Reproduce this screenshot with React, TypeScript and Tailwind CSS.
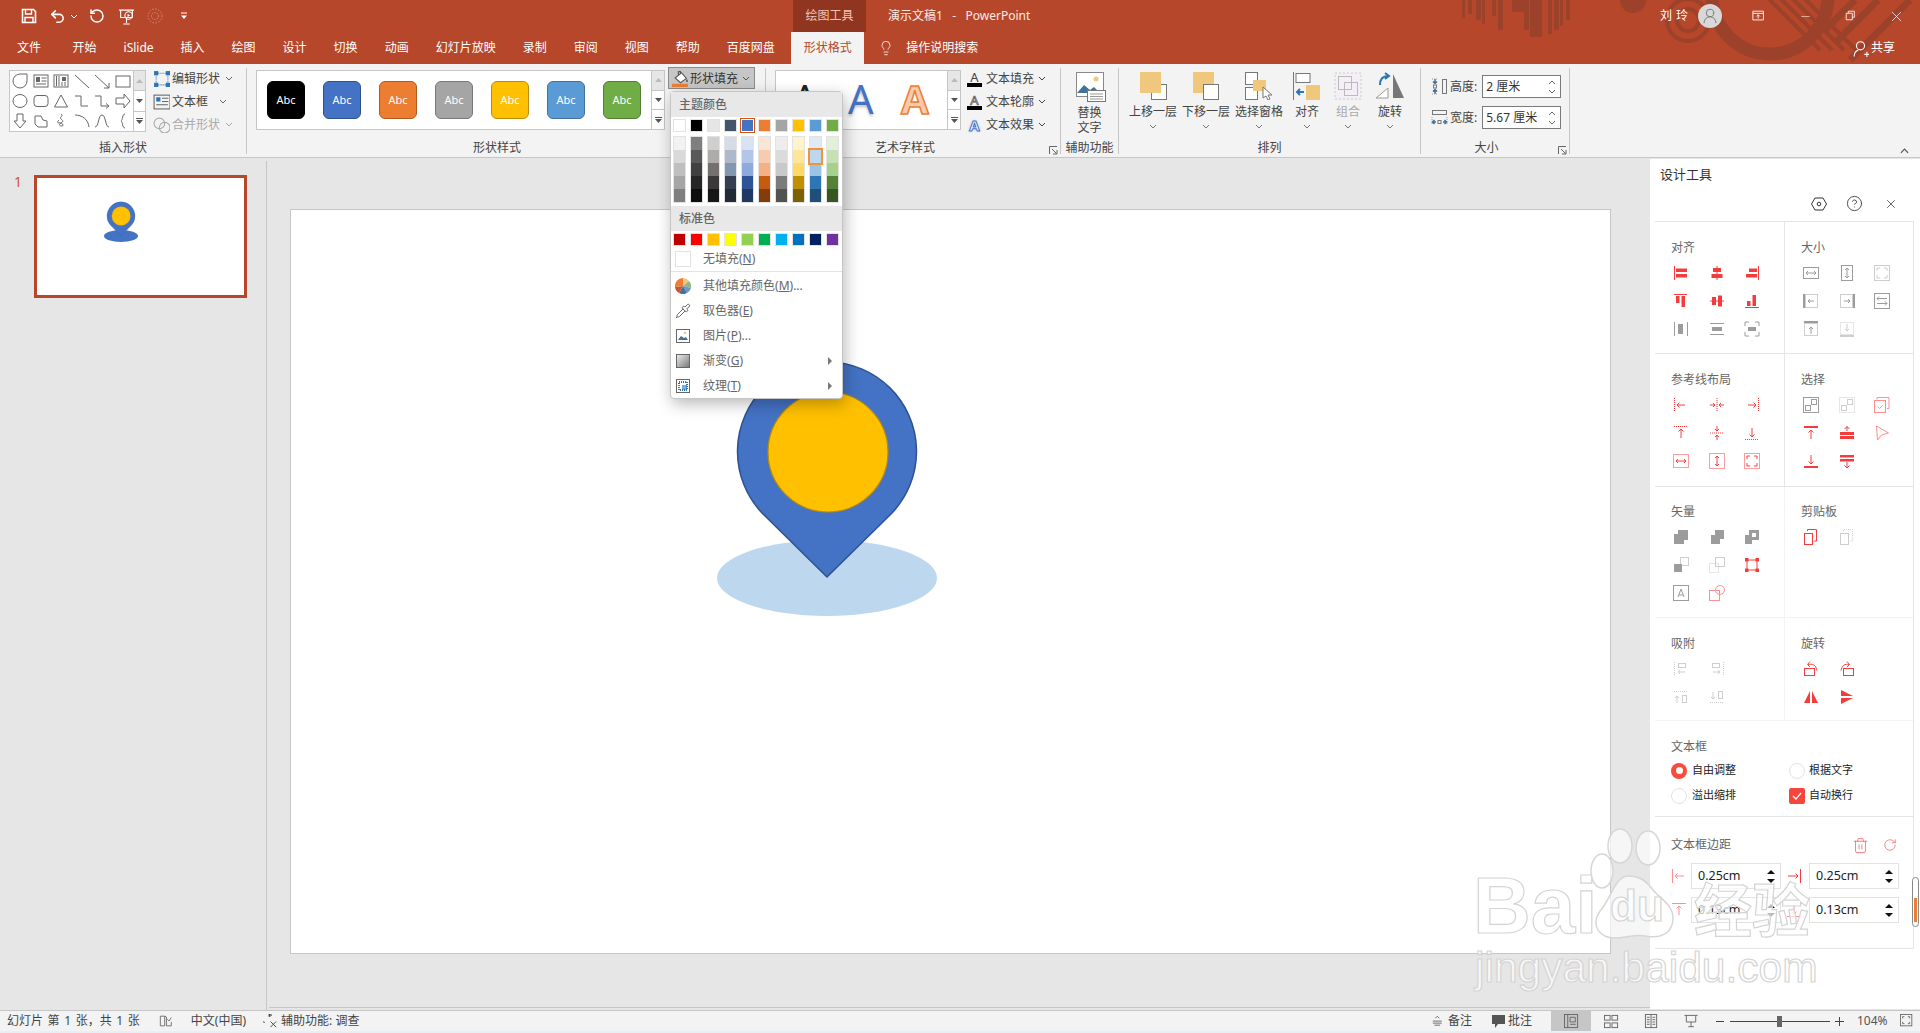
import { ReactNode } from "react";
import { Undo2, RotateCcw, Lightbulb, X, Minus, Trash2, RotateCw, CircleHelp, Pipette, UserRound } from "lucide-react";

const red = "text-[#f53c3c]";
const pink = "text-[#ff8f8f]";
const gray = "text-[#9c9c9c]";
const pale = "text-[#cdcdcd]";

function Ic({ c, children, s = 16, v = "0 0 16 16" }: { c?: string; children: ReactNode; s?: number; v?: string }) {
  return (
    <svg width={s} height={s} viewBox={v} fill="none" stroke="currentColor" strokeWidth={1} className={`shrink-0 ${c ?? ""}`}>
      {children}
    </svg>
  );
}

const b = (x: number, y: number, w: number, h: number) => <rect x={x} y={y} width={w} height={h} fill="currentColor" stroke="none" />;
const o = (x: number, y: number, w: number, h: number, dash?: boolean) => (
  <rect x={x} y={y} width={w} height={h} strokeDasharray={dash ? "1 1" : undefined} />
);
const l = (d: string, dash?: boolean) => <path d={d} strokeDasharray={dash ? "1 1" : undefined} />;

function Chev({ c = "text-[#666]" }: { c?: string }) {
  return (
    <svg width="8" height="5" viewBox="0 0 8 5" fill="none" stroke="currentColor" className={`shrink-0 ${c}`}>
      <path d="M1 1l3 3 3-3" />
    </svg>
  );
}

function HeaderArt() {
  const stripes = [0, 6, 14, 20, 30, 36, 50, 56, 62, 70, 86, 92, 98, 104];
  const depths = [18, 14, 20, 24, 16, 30, 8, 12, 30, 37, 34, 30, 26, 20];
  return (
    <svg className="absolute right-0 top-0 text-[#9c412a]" width="460" height="64" viewBox="0 0 460 64" fill="currentColor">
      {stripes.map((x, i) => (
        <rect key={i} x={x + 2} y={0} width={3 + (i % 3)} height={depths[i]} />
      ))}
      <rect x="70" y="0" width="12" height="37" />
      <rect x="52" y="0" width="14" height="12" />
      <circle cx="173" cy="0" r="13" />
      <g fill="none" stroke="currentColor">
        <circle cx="228" cy="20" r="21" strokeWidth="4" />
        <circle cx="228" cy="20" r="11" strokeWidth="4" />
        <circle cx="310" cy="-4" r="58" strokeWidth="13" />
        <path d="M304 -6L360 50M316 -6L372 50M328 -6L384 50M340 -6L396 50" strokeWidth="4" />
        <path d="M395 0L365 30M418 0L375 43M450 0L390 60" strokeWidth="7" />
      </g>
    </svg>
  );
}

function TitleBar() {
  return (
    <div className="relative h-[32px] flex items-center text-white">
      <Ic c="ml-[21px]" s={16}>
        <path d="M1.500 1.500h11l2 2v11h-13z" strokeWidth={1.6} />
        <path d="M4.500 2v4h6V2M4 14.500V9.500h8v5" strokeWidth={1.4} />
      </Ic>
      <Undo2 size={17} strokeWidth={2.2} className="ml-[12px]" />
      <Chev c="ml-[4px] text-white" />
      <RotateCcw size={16} strokeWidth={2.2} className="ml-[11px]" />
      <Ic c="ml-[13px]" s={17}>
        {l("M1 2h14M2.500 2v7h11V2M8 9v5M5 15h6")}
        <circle cx="10" cy="7" r="3.500" />
        <path d="M9 5.500l2.400 1.500L9 8.500z" fill="currentColor" stroke="none" />
      </Ic>
      <Ic c="ml-[12px] text-[#d48a73]" s={16}>
        <circle cx="8" cy="8" r="7" strokeDasharray="1.500 1.500" />
        <circle cx="8" cy="8" r="3.500" strokeDasharray="1.500 1" />
      </Ic>
      <svg width="8" height="8" viewBox="0 0 8 8" className="ml-[17px] text-white" fill="currentColor">
        <rect x="1" y="0.500" width="6" height="1" />
        <path d="M1 3.500h6L4 7z" />
      </svg>
      <div className="absolute left-[793px] top-0 w-[73px] h-[32px] bg-[#8f3520] flex items-center justify-center text-[#f2c6b6] text-[12px]">
        绘图工具
      </div>
      <span className="absolute left-[888px] text-[12px] whitespace-pre text-[#fbeae4]">演示文稿1   -   PowerPoint</span>
      <div className="ml-auto flex items-center">
        <span className="text-[12px] tracking-[4px]">刘玲</span>
        <div className="ml-[6px] w-[24px] h-[24px] rounded-full bg-[#d8d8d8] flex items-center justify-center text-[#777]">
          <UserRound size={18} strokeWidth={1.3} />
        </div>
        <Ic c="ml-[30px]" s={14}>
          {l("M1 2.500h12v10H1zM1 5h12M7 11V7M5 8.500L7 6.500l2 2")}
        </Ic>
        <Minus size={13} strokeWidth={1} className="ml-[33px]" />
        <Ic c="ml-[33px]" s={13}>
          {l("M1.500 4h7.500v8H1.500zM4 4V1.500h7.500V9H9")}
        </Ic>
        <X size={17} strokeWidth={1} className="ml-[30px] mr-[15px]" />
      </div>
    </div>
  );
}

const tabs = ["开始", "iSlide", "插入", "绘图", "设计", "切换", "动画", "幻灯片放映", "录制", "审阅", "视图", "帮助", "百度网盘"];

function TabRow() {
  return (
    <div className="relative h-[32px] flex items-stretch text-white text-[12px] pl-[3.500px]">
      <div className="pl-[13.500px] pr-[18px] flex items-center">文件</div>
      {tabs.map((t) => (
        <div key={t} className="px-[13.500px] flex items-center">
          {t}
        </div>
      ))}
      <div className="w-[73px] ml-[3px] bg-[#f3f3f3] text-[#b7472a] flex items-center justify-center">形状格式</div>
      <Lightbulb size={16} strokeWidth={1.2} className="ml-[14px] self-center" />
      <span className="ml-[12px] self-center">操作说明搜索</span>
      <div className="ml-auto mr-[25px] flex items-center gap-[2px]">
        <Ic s={17}>
          <circle cx="8" cy="5.500" r="3.800" />
          {l("M2 15.500c0-3.500 2-5.500 4-6.200M11.500 13.500h5M14 11v5")}
        </Ic>
        <span>共享</span>
      </div>
    </div>
  );
}

function Group({ w, label, children, launcher, labelPr = 0 }: { w: number; label: string; children: ReactNode; launcher?: boolean; labelPr?: number }) {
  return (
    <div className="relative flex flex-col h-[86px] mt-[4px] border-r border-[#c6c6c6] shrink-0" style={{ width: w }}>
      <div className="flex-1 flex min-h-0">{children}</div>
      <div className="h-[16px] -mb-[2px] leading-[16px] text-center text-[12px] text-[#444]" style={{ paddingRight: labelPr }}>
        {label}
      </div>
      {launcher && (
        <Ic c="absolute right-[2px] bottom-[-1px] text-[#666]" s={9} v="0 0 9 9">
          {l("M.500 8V.500H8M3 3l4.500 4.500M4 8h4V4")}
        </Ic>
      )}
    </div>
  );
}

const shapes: ReactNode[] = [
  l("M8 1h7v7a7 7 0 01-14 0 7 7 0 017-7z"),
  <>{o(1, 2, 14, 12)}{b(3, 4, 4, 5)}{l("M8.500 5h5M8.500 8h5M3 11h10")}</>,
  <>{o(1, 2, 14, 12)}{b(9, 4, 4, 4)}{l("M3.500 3v10M6 3v10M9 9v4M12 9v4")}</>,
  l("M1 2l14 13"),
  l("M1 2l14 13M15 10v5h-5"),
  o(1, 3, 14, 11),
  <ellipse cx="8" cy="8" rx="7" ry="6.500" />,
  <rect x="1" y="2.500" width="14" height="11" rx="3" />,
  l("M8 2l6.500 12h-13z"),
  l("M1 3h6v10h7"),
  l("M1 3h6v10h8M12 10.500l3 2.500-3 2.500"),
  l("M1 5h8V1l6 7-6 7v-4H1z"),
  l("M5 1h6v7h3l-6 7-6-7h3z"),
  l("M2 3h6l2 4 4 1v6H5l-3-3z"),
  l("M8 1c3 2-2 3 0 5s3 2 0 4-1 3 1 3 1-3-2-3-3-1-1-3"),
  l("M1 2c7 0 13 4 14 12"),
  l("M1 14C5 14 4 2 8 2s3 12 7 12"),
  l("M10 1C7 1 8 7 6 8c2 1 1 7 4 7"),
];

function ShapeGallery() {
  return (
    <div className="flex w-[137px] h-[62px] mt-[2px] ml-[9px] border border-[#c6c6c6] bg-white">
      <div className="w-[123px] grid grid-cols-6 grid-rows-3 text-[#666]">
        {shapes.map((s, i) => (
          <div key={i} className="flex items-center justify-center">
            <Ic>{s}</Ic>
          </div>
        ))}
      </div>
      <Scroller />
    </div>
  );
}

function Scroller() {
  return (
    <div className="flex-1 flex flex-col border-l border-[#c6c6c6] text-[#555]">
      <div className="flex-1 bg-[#e6e6e6] flex items-center justify-center text-[#bbb]">
        <svg width="7" height="4" viewBox="0 0 7 4" fill="currentColor"><path d="M0 4h7L3.500 0z" /></svg>
      </div>
      <div className="flex-1 border-t border-[#c6c6c6] flex items-center justify-center">
        <svg width="7" height="4" viewBox="0 0 7 4" fill="currentColor"><path d="M0 0h7L3.500 4z" /></svg>
      </div>
      <div className="flex-1 border-t border-[#c6c6c6] flex flex-col gap-[1px] items-center justify-center">
        <div className="w-[7px] h-[1px] bg-[#555]" />
        <svg width="7" height="4" viewBox="0 0 7 4" fill="currentColor"><path d="M0 0h7L3.500 4z" /></svg>
      </div>
    </div>
  );
}

function InsertShapes() {
  const rowCls = "h-[23px] flex items-center text-[12px]";
  return (
    <Group w={247} label="插入形状">
      <ShapeGallery />
      <div className="ml-[7px] mt-[-1px] flex flex-col text-[#444]">
        <div className={rowCls}>
          <Ic c="text-[#2e75b5]" s={17}>
            {o(3, 3, 11, 11, true)}
            {b(1, 1, 4, 4)}{b(12, 1, 4, 4)}{b(1, 12, 4, 4)}{b(12, 12, 4, 4)}
          </Ic>
          <span className="ml-[2px] w-[48px]">编辑形状</span>
          <Chev c="ml-[5px] text-[#666]" />
        </div>
        <div className={rowCls}>
          <Ic c="text-[#666]" s={17}>
            {o(1, 2, 15, 13)}
            <rect x="3" y="4" width="4" height="4" fill="#2e75b5" stroke="none" />
            {l("M8.500 5h6M8.500 8h6M3 11h11")}
          </Ic>
          <span className="ml-[2px] w-[36px]">文本框</span>
          <Chev c="ml-[11px] text-[#666]" />
        </div>
        <div className={`${rowCls} text-[#aaa]`}>
          <Ic c="text-[#aaa]" s={17}>
            <circle cx="6" cy="7" r="5" />
            <circle cx="11" cy="11" r="5" />
          </Ic>
          <span className="ml-[2px] w-[48px]">合并形状</span>
          <Chev c="ml-[5px] text-[#aaa]" />
        </div>
      </div>
    </Group>
  );
}

const abc = [
  "bg-black border-black",
  "bg-[#4472c4] border-[#2f528f]",
  "bg-[#ed7d31] border-[#ae5a21]",
  "bg-[#a5a5a5] border-[#787878]",
  "bg-[#ffc000] border-[#bc8c00]",
  "bg-[#5b9bd5] border-[#41719c]",
  "bg-[#70ad47] border-[#507e32]",
];

function ShapeStyles() {
  return (
    <Group w={519} label="形状样式" labelPr={18}>
      <div className="flex h-[60px] mt-[2px] ml-[9px] w-[409px] border border-[#c6c6c6] bg-white">
        <div className="w-[394px] pl-[10px] flex items-center gap-[18px]">
          {abc.map((c) => (
            <div key={c} className={`w-[38px] h-[38px] rounded-[6px] border flex items-center justify-center text-[11px] text-white ${c}`}>
              Abc
            </div>
          ))}
        </div>
        <Scroller />
      </div>
      <div className="ml-[3px] w-[87px] h-[22px] translate-y-[-1px] bg-[#c6c6c6] border border-[#8a8a8a] flex items-center text-[12px] text-[#333] pl-[3px] pt-[1px]">
        <Ic s={17}>
          <path d="M3 7.500l6-5 4.500 5.500-5.500 4z" fill="#fff" stroke="#555" />
          <path d="M6 5V1.500h2V4" stroke="#555" />
          <path d="M14 8.500c1 1.500 1.500 2.500 0 3-1-.500-1-1.500 0-3z" fill="#555" stroke="none" />
          <rect x="0" y="13" width="15" height="3" fill="#ed7d31" stroke="none" />
        </Ic>
        <span className="ml-[1px]">形状填充</span>
        <Chev c="ml-[4px] text-[#555]" />
      </div>
    </Group>
  );
}

function WordArt() {
  const row = "h-[23px] flex items-center text-[12px] text-[#444]";
  return (
    <Group w={295} label="艺术字样式" launcher labelPr={16}>
      <div className="flex h-[60px] mt-[2px] ml-[9px] w-[186px] border border-[#c6c6c6] bg-white">
        <div className="w-[171px] relative overflow-hidden">
          <span className="absolute left-[16px] top-0 text-[40px] leading-[56px] text-[#222]">A</span>
          <span className="absolute left-[72px] top-0 text-[40px] leading-[56px] text-[#4472c4] [text-shadow:0_2px_3px_rgba(0,0,0,.25)]">A</span>
          <span className="absolute left-[125px] top-0 text-[40px] leading-[56px] font-bold text-[#f8cbad] [-webkit-text-stroke:1.500px_#ed7d31]">A</span>
        </div>
        <Scroller />
      </div>
      <div className="ml-[5px] flex flex-col -mt-[1px]">
        <div className={row}>
          <div className="w-[17px] flex flex-col items-center leading-none">
            <span className="text-[13px] h-[12px] leading-[12px] text-[#444]">A</span>
            <div className="w-[15px] h-[4px] bg-black" />
          </div>
          <span className="ml-[3px]">文本填充</span>
          <Chev c="ml-[4px]" />
        </div>
        <div className={row}>
          <div className="w-[17px] flex flex-col items-center leading-none">
            <span className="text-[13px] h-[12px] leading-[12px] text-white [-webkit-text-stroke:.7px_#555]">A</span>
            <div className="w-[15px] h-[4px] bg-black" />
          </div>
          <span className="ml-[3px]">文本轮廓</span>
          <Chev c="ml-[4px]" />
        </div>
        <div className={row}>
          <div className="w-[17px] flex justify-center">
            <span className="text-[15px] leading-[16px] font-bold text-white [-webkit-text-stroke:1px_#4472c4] [text-shadow:0_0_3px_#9cc3e5]">A</span>
          </div>
          <span className="ml-[3px]">文本效果</span>
          <Chev c="ml-[4px]" />
        </div>
      </div>
    </Group>
  );
}

function AltText() {
  return (
    <Group w={58} label="辅助功能">
      <div className="w-full flex flex-col items-center text-[12px] text-[#444] leading-[15px]">
        <svg width="32" height="30" viewBox="0 0 32 30" className="mt-[4px] mb-[3px]">
          <rect x="2.500" y=".500" width="27" height="24" fill="#fff" stroke="#888" />
          <circle cx="22" cy="7" r="2.500" fill="#f0c87d" />
          <path d="M3 21l7-8 6 5 4-3 6 6z" fill="#41719c" />
          <rect x="13.500" y="18.500" width="18" height="11" fill="#fff" stroke="#777" />
          <path d="M16 22h13M16 24.500h13M16 27h13" stroke="#999" />
        </svg>
        <span>替换</span>
        <span>文字</span>
      </div>
    </Group>
  );
}

function BigBtn({ icon, label, w, ml, dim }: { icon: ReactNode; label: string; w: number; ml: number; dim?: boolean }) {
  return (
    <div className={`flex flex-col items-center text-[12px] ${dim ? "text-[#aaa]" : "text-[#444]"}`} style={{ width: w, marginLeft: ml }}>
      <div className="h-[36px] pt-[4px] flex justify-center">{icon}</div>
      <span className="leading-[16px] whitespace-nowrap">{label}</span>
      <Chev c="mt-[4px] text-[#777]" />
    </div>
  );
}

function Arrange() {
  return (
    <Group w={302} label="排列">
      <BigBtn
        w={48}
        ml={10}
        label="上移一层"
        icon={
          <svg width="27" height="28" viewBox="0 0 27 28">
            <rect x="11.500" y="12.500" width="15" height="15" fill="#fff" stroke="#777" />
            <rect x="0" y="0" width="21" height="21" fill="#f0c87d" />
          </svg>
        }
      />
      <BigBtn
        w={48}
        ml={5}
        label="下移一层"
        icon={
          <svg width="27" height="28" viewBox="0 0 27 28">
            <rect x="0" y="0" width="21" height="21" fill="#f0c87d" />
            <rect x="10.500" y="12.500" width="15" height="15" fill="#fff" stroke="#777" />
          </svg>
        }
      />
      <BigBtn
        w={48}
        ml={5}
        label="选择窗格"
        icon={
          <svg width="28" height="28" viewBox="0 0 28 28">
            <rect x=".500" y=".500" width="12" height="12" fill="#fff" stroke="#777" />
            <rect x=".500" y="15.500" width="12" height="12" fill="#fff" stroke="#777" />
            <rect x="8" y="8" width="13" height="11" fill="#f0c87d" />
            <path d="M18 15v11l3-2 2 4 2-1-2-4h4z" fill="#fff" stroke="#777" />
          </svg>
        }
      />
      <BigBtn
        w={28}
        ml={10}
        label="对齐"
        icon={
          <svg width="28" height="28" viewBox="0 0 28 28">
            <path d="M.500 0v28" stroke="#777" />
            <rect x="3" y="1.500" width="14" height="9" fill="#fff" stroke="#777" />
            <rect x="13" y="13" width="14" height="15" fill="#f0c87d" />
            <path d="M11 20H4M7 17l-3 3 3 3" stroke="#2e75b5" strokeWidth="2" fill="none" />
          </svg>
        }
      />
      <BigBtn
        w={28}
        ml={13}
        dim
        label="组合"
        icon={
          <svg width="28" height="28" viewBox="0 0 28 28">
            <rect x="1" y="1" width="26" height="26" fill="#f4eff6" stroke="#ccc" strokeDasharray="2 2" />
            <rect x="4.500" y="4.500" width="13" height="13" fill="none" stroke="#bbb" />
            <rect x="10.500" y="10.500" width="13" height="13" fill="none" stroke="#bbb" />
          </svg>
        }
      />
      <BigBtn
        w={28}
        ml={14}
        label="旋转"
        icon={
          <svg width="30" height="28" viewBox="0 0 30 28">
            <path d="M1 26L13 16v10z" fill="#fff" stroke="#999" />
            <path d="M18 2l11 24H18z" fill="#777" />
            <path d="M5 13c0-6 3-9 8-9M10 1l4 3-4 3" fill="none" stroke="#2e75b5" strokeWidth="2" />
          </svg>
        }
      />
    </Group>
  );
}

function SizeInput({ value }: { value: string }) {
  return (
    <div className="ml-[5px] w-[79px] h-[23px] bg-white border border-[#7a7a7a] flex items-center pl-[3px] text-[12px] text-[#333]">
      <span className="whitespace-pre">{value}</span>
      <div className="ml-auto mr-[4px] flex flex-col gap-[4px]">
        <Chev c="rotate-180 text-[#666]" />
        <Chev c="text-[#666]" />
      </div>
    </div>
  );
}

function SizeGroup() {
  return (
    <Group w={149} label="大小" launcher labelPr={17}>
      <div className="pl-[10px] pt-[7px] flex flex-col gap-[8px] text-[12px] text-[#444]">
        <div className="flex items-center">
          <svg width="17" height="17" viewBox="0 0 17 17" fill="none" className="shrink-0">
            <rect x="11.500" y="1.500" width="4" height="14" stroke="#777" />
            <path d="M4 1v4M2 3.500L4 5.500l2-2" stroke="#41719c" strokeWidth="1.500" />
            <path d="M4 16v-4M2 13.500l2-2 2 2" stroke="#41719c" strokeWidth="1.500" />
            <rect x="2.500" y="7" width="3" height="3" stroke="#777" />
            <path d="M1 1h6M1 16h6" stroke="#999" strokeDasharray="1 1" />
          </svg>
          <span className="ml-[2px]">高度:</span>
          <SizeInput value="2 厘米" />
        </div>
        <div className="flex items-center">
          <svg width="17" height="17" viewBox="0 0 17 17" fill="none" className="shrink-0">
            <rect x="1.500" y="1.500" width="14" height="4" stroke="#777" />
            <path d="M1 8v8M16 8v8" stroke="#999" strokeDasharray="1 1" />
            <path d="M5 13H1.500M3.500 11l-2 2 2 2" stroke="#41719c" strokeWidth="1.500" />
            <path d="M12 13h3.500M13.500 11l2 2-2 2" stroke="#41719c" strokeWidth="1.500" />
            <rect x="7" y="11.500" width="3" height="3" stroke="#777" />
          </svg>
          <span className="ml-[2px]">宽度:</span>
          <SizeInput value="5.67 厘米" />
        </div>
      </div>
    </Group>
  );
}

function Ribbon() {
  return (
    <div className="relative h-[94px] bg-[#f3f3f3] border-b border-[#c6c6c6] flex items-start">
      <InsertShapes />
      <ShapeStyles />
      <WordArt />
      <AltText />
      <Arrange />
      <SizeGroup />
      <Chev c="absolute right-[10px] bottom-[3px] rotate-180 w-[11px] h-[6px] text-[#555]" />
    </div>
  );
}

function Pin({ fillCircle }: { fillCircle: number }) {
  return (
    <>
      <path d="M0 125L-65 61A89.500 89.500 0 1 1 65 61Z" fill="#4472c4" stroke="#2f528f" strokeWidth="1.500" />
      <circle cx="1" cy="0" r={fillCircle} fill="#ffc000" stroke="#bc8c00" strokeWidth="1.200" />
    </>
  );
}

function ThumbPane() {
  return (
    <div className="w-[267px] shrink-0 mt-[3px] border-r border-[#c6c6c6] pt-[14px] pl-[14px] flex items-start">
      <span className="w-[20px] text-[14px] leading-[14px] text-[#c9573b]">1</span>
      <div className="w-[213px] h-[123px] border-[3px] border-[#b7472a] bg-white">
        <svg width="207" height="117" viewBox="3 3 207 117">
          <ellipse cx="87" cy="61" rx="17" ry="6" fill="#4472c4" />
          <g transform="translate(87 41) scale(.157)">
            <Pin fillCircle={60} />
          </g>
        </svg>
      </div>
    </div>
  );
}

function Canvas() {
  return (
    <div className="flex-1 flex flex-col min-w-0">
      <div className="flex-1 pl-[23px] pt-[51px]">
        <div className="relative w-[1321px] h-[745px] bg-white border border-[#c6c6c6]">
          <svg className="absolute left-[419px] top-[140px]" width="230" height="270" viewBox="710 350 230 270">
            <ellipse cx="827" cy="578" rx="110" ry="38" fill="#bdd7ee" />
            <g transform="translate(827 452)">
              <Pin fillCircle={60} />
            </g>
          </svg>
        </div>
      </div>
      <div className="h-[3px] ml-[2px] border-t border-[#c6c6c6]" />
    </div>
  );
}

const themeRow = ["#ffffff", "#000000", "#e7e6e6", "#44546a", "#4472c4", "#ed7d31", "#a5a5a5", "#ffc000", "#5b9bd5", "#70ad47"];
const shades = [
  ["#f2f2f2", "#d9d9d9", "#bfbfbf", "#a6a6a6", "#7f7f7f"],
  ["#7f7f7f", "#595959", "#404040", "#262626", "#0d0d0d"],
  ["#d0cece", "#aeabab", "#757070", "#3a3838", "#171616"],
  ["#d6dce5", "#adb9ca", "#8497b0", "#333f50", "#222a35"],
  ["#d9e2f3", "#b4c6e7", "#8eaadb", "#2f5496", "#1f3864"],
  ["#fbe5d5", "#f7cbac", "#f4b183", "#c55a11", "#833c0b"],
  ["#ededed", "#dbdbdb", "#c9c9c9", "#7b7b7b", "#525252"],
  ["#fff2cc", "#ffe599", "#ffd966", "#bf8f00", "#7f6000"],
  ["#deeaf6", "#bdd7ee", "#9cc3e5", "#2e75b5", "#1e4e79"],
  ["#e2efd9", "#c5e0b3", "#a8d08d", "#538135", "#375623"],
];
const standard = ["#c00000", "#ff0000", "#ffc000", "#ffff00", "#92d050", "#00b050", "#00b0f0", "#0070c0", "#002060", "#7030a0"];

function MenuItem({ icon, text, k, tail, arrow }: { icon: ReactNode; text: string; k: string; tail?: string; arrow?: boolean }) {
  return (
    <div className="h-[25px] flex items-center text-[12px] text-[#666]">
      <div className="w-[24px] flex justify-center">{icon}</div>
      <span className="ml-[8px]">
        {text}(<span className="underline">{k}</span>){tail}
      </span>
      {arrow && (
        <svg width="4" height="8" viewBox="0 0 4 8" fill="#777" className="ml-auto mr-[10px]">
          <path d="M0 0l4 4-4 4z" />
        </svg>
      )}
    </div>
  );
}

function FillMenu() {
  return (
    <div className="absolute left-[670px] top-[91px] w-[173px] h-[308px] bg-white border border-[#c6c6c6] rounded-[4px] shadow-[2px_5px_16px_rgba(0,0,0,0.28)]">
      <div className="h-[25px] bg-[#e8e8e8] pl-[8px] flex items-center text-[12px] text-[#666] font-medium">主题颜色</div>
      <div className="mt-[2px] pl-[2px] flex gap-[4px]">
        {themeRow.map((c) => (
          <div
            key={c}
            className={`w-[13px] h-[13px] border ${c === "#4472c4" ? "outline outline-1 outline-[#d9540f] border-white" : "border-[#e2e2e2]"}`}
            style={{ background: c }}
          />
        ))}
      </div>
      <div className="mt-[4px] pl-[2px] flex gap-[4px]">
        {shades.map((col, i) => (
          <div key={i} className="w-[13px] border border-[#e2e2e2] flex flex-col">
            {col.map((c, j) => (
              <div
                key={c + j}
                className={`h-[13px] ${i === 8 && j === 1 ? "outline outline-2 outline-[#f29436] relative z-10" : ""}`}
                style={{ background: c }}
              />
            ))}
          </div>
        ))}
      </div>
      <div className="mt-[3px] h-[25px] bg-[#e8e8e8] pl-[8px] flex items-center text-[12px] text-[#666] font-medium">标准色</div>
      <div className="mt-[2px] pl-[2px] flex gap-[4px]">
        {standard.map((c) => (
          <div key={c} className="w-[13px] h-[13px] border border-[#e2e2e2]" style={{ background: c }} />
        ))}
      </div>
      <div className="h-[24px] mt-[1px] flex items-center text-[12px] text-[#666]">
        <div className="ml-[4px] w-[16px] h-[16px] bg-white border border-[#e2e2e2]" />
        <span className="ml-[12px]">
          无填充(<span className="underline">N</span>)
        </span>
      </div>
      <div className="h-px bg-[#e2e2e2]" />
      <div className="pt-[1px]">
        <MenuItem
          text="其他填充颜色"
          k="M"
          tail="..."
          icon={
            <svg width="16" height="16" viewBox="0 0 16 16">
              <path d="M8 8V0a8 8 0 016 3z" fill="#f0c87d" />
              <path d="M8 8l6-5a8 8 0 012 7z" fill="#8fb58f" />
              <path d="M8 8l8 2a8 8 0 01-4 5z" fill="#6d97c4" />
              <path d="M8 8l4 7a8 8 0 01-8 0z" fill="#41719c" />
              <path d="M8 8l-4 7a8 8 0 01-4-6z" fill="#c9572d" />
              <path d="M8 8L0 9a8 8 0 018-9z" fill="#ed7d31" />
            </svg>
          }
        />
        <MenuItem text="取色器" k="E" icon={<Pipette size={16} strokeWidth={1.300} className="text-[#555]" />} />
        <MenuItem
          text="图片"
          k="P"
          tail="..."
          icon={
            <svg width="14" height="14" viewBox="0 0 14 14">
              <rect x=".500" y=".500" width="13" height="13" fill="#fff" stroke="#666" />
              <circle cx="9" cy="4" r="1.300" fill="#f0c87d" />
              <path d="M2 11l3-4 3 2 2-1 2 3z" fill="#41719c" />
            </svg>
          }
        />
        <MenuItem
          text="渐变"
          k="G"
          arrow
          icon={
            <svg width="14" height="14" viewBox="0 0 14 14">
              <defs>
                <linearGradient id="gradFill" x1="0" y1="0" x2="1" y2="1">
                  <stop offset="0" stopColor="#eee" />
                  <stop offset="1" stopColor="#777" />
                </linearGradient>
              </defs>
              <rect x=".500" y=".500" width="13" height="13" fill="url(#gradFill)" stroke="#666" />
            </svg>
          }
        />
        <MenuItem
          text="纹理"
          k="T"
          arrow
          icon={
            <svg width="14" height="14" viewBox="0 0 14 14">
              <rect x=".500" y=".500" width="13" height="13" fill="#fff" stroke="#666" />
              <rect x="3" y="3" width="8" height="8" fill="none" stroke="#2e75b5" strokeWidth="2" strokeDasharray="1 1" />
              <rect x="6" y="6" width="5" height="5" fill="#2e75b5" opacity=".6" />
            </svg>
          }
        />
      </div>
    </div>
  );
}

type Cell = [string, ReactNode];

const alignIcons: Cell[] = [
  [red, <>{l("M1.500 1v14")}{b(3, 3.500, 11, 3.500)}{b(3, 9, 11, 3.500)}</>],
  [red, <>{l("M8 1v14")}{b(4, 3, 8, 4)}{b(2.500, 9, 11, 4)}</>],
  [red, <>{l("M14.500 1v14")}{b(5, 3.500, 8, 3.500)}{b(2, 9, 11, 3.500)}</>],
  [red, <>{l("M1 1.500h13")}{b(3, 3, 3.500, 7)}{b(8.500, 3, 3.500, 11)}</>],
  [red, <>{l("M1 8h14")}{b(3, 4, 4, 8)}{b(9, 2.500, 4, 11)}</>],
  [red, <>{l("M1 14.500h14")}{b(3, 8, 3.500, 5)}{b(8.500, 2, 3.500, 11)}</>],
  [gray, <>{l("M1.500 1v14M14.500 1v14")}{b(5, 3, 5, 10)}</>],
  [gray, <>{l("M1 2.500h14M1 13.500h14")}{b(3, 6, 10, 4)}</>],
  [gray, <>{l("M1 5V1h4M11 1h4v4M15 11v4h-4M5 15H1v-4")}{b(4, 6, 8, 4)}</>],
];

const sizeIcons: Cell[] = [
  [gray, <>{o(.500, 2.500, 15, 11)}{l("M3 8h10M5 6L3 8l2 2M11 6l2 2-2 2")}</>],
  [gray, <>{o(2.500, .500, 11, 15)}{l("M8 3v10M6 5l2-2 2 2M6 11l2 2 2-2")}</>],
  [pale, <>{o(.500, .500, 15, 15)}{l("M3 6V3h3M10 3h3v3M13 10v3h-3M6 13H3v-3")}</>],
  [gray, <>{b(0, 1, 2, 14)}{o(2.500, 1.500, 12, 13, true)}{l("M11 8H5M7 6L5 8l2 2")}</>],
  [gray, <>{b(14, 1, 2, 14)}{o(1.500, 1.500, 12, 13, true)}{l("M5 8h6M9 6l2 2-2 2")}</>],
  [gray, <>{o(.500, .500, 15, 15)}{l("M3 5.500h10M5 3.500l-2 2 2 2M13 10.500H3M11 8.500l2 2-2 2")}</>],
  [gray, <>{b(1, 0, 14, 2)}{o(1.500, 2.500, 13, 12, true)}{l("M8 13V6M6 8l2-2 2 2")}</>],
  [pale, <>{b(1, 14, 14, 2)}{o(1.500, 1.500, 13, 12, true)}{l("M8 3v7M6 8l2 2 2-2")}</>],
];

const guideIcons: Cell[] = [
  [red, <>{l("M1.500 1v14", true)}{l("M12 8H4M6.500 5.500L4 8l2.500 2.500")}</>],
  [red, <>{l("M8 1v14", true)}{l("M1 8h5M4 6l2 2-2 2M15 8h-5M12 6l-2 2 2 2")}</>],
  [red, <>{l("M14.500 1v14", true)}{l("M4 8h8M9.500 5.500L12 8l-2.500 2.500")}</>],
  [red, <>{l("M1 1.500h14", true)}{l("M8 13V4M5.500 6.500L8 4l2.500 2.500")}</>],
  [red, <>{l("M1 8h14", true)}{l("M8 1v5M6 4l2 2 2-2M8 15v-5M6 12l2-2 2 2")}</>],
  [red, <>{l("M1 14.500h14", true)}{l("M8 3v9M5.500 9.500L8 12l2.500-2.500")}</>],
  [red, <>{o(.500, 1.500, 15, 13, true)}{l("M3 8h10M5 6L3 8l2 2M11 6l2 2-2 2")}</>],
  [red, <>{o(.500, .500, 15, 15, true)}{l("M8 3v10M6 5l2-2 2 2M6 11l2 2 2-2")}</>],
  [red, <>{o(.500, .500, 15, 15, true)}{l("M3 6V3h3M10 3h3v3M13 10v3h-3M6 13H3v-3")}</>],
];

const selectIcons: Cell[] = [
  [gray, <>{o(.500, .500, 15, 15)}{o(2.500, 8.500, 5, 5)}{o(8.500, 2.500, 5, 5)}</>],
  [pale, <>{o(.500, .500, 15, 15, true)}{o(2.500, 8.500, 5, 5)}{o(8.500, 2.500, 5, 5)}</>],
  [pink, <>{o(.500, 3.500, 11, 12)}{l("M3 2.500V.500h12v11h-2")}{l("M3.500 9.500l2 2 3-3")}</>],
  [red, <>{b(1, 1, 14, 2)}{l("M8 14V5M5.500 7.500L8 5l2.500 2.500")}</>],
  [red, <>{b(1, 7, 14, 3)}{b(1, 11, 14, 3)}{l("M8 6V1.500M5.500 4L8 1.500 10.500 4")}</>],
  [pink, l("M2.500 1l12 7-7 2-4 5z")],
  [red, <>{b(1, 13, 14, 2)}{l("M8 2v9M5.500 8.500L8 11l2.500-2.500")}</>],
  [red, <>{b(1, 2, 14, 2.500)}{b(1, 6, 14, 2.500)}{l("M8 9v6M5.500 12.500L8 15l2.500-2.500")}</>],
];

const vectorIcons: Cell[] = [
  [gray, <>{b(5, 1, 10, 10)}{b(1, 5, 10, 10)}</>],
  [gray, <>{b(6, 1, 9, 9)}{b(2, 6, 9, 9)}</>],
  [gray, <><path d="M5 1h10v10H5z M8 4v4h4V4z" fill="currentColor" fillRule="evenodd" stroke="none" />{b(1, 6, 7, 9)}</>],
  [gray, <>{o(7.500, .500, 8, 8, true)}{b(1, 7, 8, 8)}</>],
  [pale, <>{o(6.500, .500, 9, 9)}{o(.500, 6.500, 9, 9, true)}</>],
  [red, <>{l("M3 3h10v10H3z")}{b(1, 1, 3.500, 3.500)}{b(11.500, 1, 3.500, 3.500)}{b(1, 11.500, 3.500, 3.500)}{b(11.500, 11.500, 3.500, 3.500)}</>],
  [gray, <>{o(.500, .500, 15, 15)}{l("M5 12l3-8 3 8M6 10h4")}</>],
  [pink, <>{o(.500, 5.500, 10, 10)}<circle cx="11" cy="5" r="4.500" /></>],
];

const clipIcons: Cell[] = [
  [red, <>{o(1.500, 4.500, 8, 11)}{l("M4.500 2V.500h9V12H11")}</>],
  [pale, <>{o(1.500, 4.500, 8, 11)}{l("M4.500 2V.500h9V12H11", true)}</>],
];

const snapIcons: Cell[] = [
  [pale, <>{l("M1.500 1v14", true)}{o(5.500, 2.500, 7, 4)}{l("M12 11H5M7 9l-2 2 2 2")}</>],
  [pale, <>{l("M14.500 1v14", true)}{o(3.500, 2.500, 7, 4)}{l("M4 11h7M9 9l2 2-2 2")}</>],
  [pale, <>{l("M1 2.500h14", true)}{l("M4 14V7M2 9l2-2 2 2")}{o(9.500, 6.500, 4, 7)}</>],
  [pale, <>{l("M1 13.500h14", true)}{l("M4 3v7M2 8l2 2 2-2")}{o(9.500, 2.500, 4, 7)}</>],
];

const rotateIcons: Cell[] = [
  [red, <>{o(1.500, 7.500, 10, 7)}{l("M5 3.500c4-1 8 0 9 6M7 .500L4.500 3.500 7 6")}</>],
  [red, <>{o(4.500, 7.500, 10, 7)}{l("M2 9.500c1-5 4-7 8-6M8 .500l2.500 3L8 6")}</>],
  [red, <><path d="M7 2v12H1zM9 2v12h6z" fill="currentColor" stroke="none" /></>],
  [red, <><path d="M2 1v6h12zM2 9v6l12-6z" fill="currentColor" stroke="none" /></>],
];

function Section({ title, icons, pt = 18, two }: { title: string; icons: Cell[]; pt?: number; two?: boolean }) {
  return (
    <div className="pl-[16px] min-w-0" style={{ paddingTop: pt }}>
      <div className="h-[16px] leading-[16px] text-[12px] text-[#666]">{title}</div>
      <div className={`mt-[9px] ml-[2px] grid ${two ? "grid-cols-[repeat(2,16px)]" : "grid-cols-[repeat(3,16px)]"} gap-x-[19.500px] auto-rows-[28px]`}>
        {icons.map(([c, node], i) => (
          <div key={i} className="h-[16px]">
            <Ic c={c}>{node}</Ic>
          </div>
        ))}
      </div>
    </div>
  );
}

function MarginInput({ v }: { v: string }) {
  return (
    <div className="w-[90px] h-[26px] border border-[#e2e2e2] flex items-center pl-[6px] text-[12.500px] text-[#222]">
      {v}
      <div className="ml-auto mr-[5px] flex flex-col gap-[5px]">
        <svg width="8" height="4" viewBox="0 0 8 4"><path d="M0 4h8L4 0z" fill="#111" /></svg>
        <svg width="8" height="4" viewBox="0 0 8 4"><path d="M0 0h8L4 4z" fill="#111" /></svg>
      </div>
    </div>
  );
}

function DesignPanel() {
  return (
    <div className="relative w-[270px] shrink-0 h-[850px] bg-white">
      <div className="h-[62px] relative">
        <div className="pl-[10px] pt-[6px] text-[13px] leading-[18px] text-[#333]">设计工具</div>
        <div className="absolute left-[161px] top-[36px] flex items-center gap-[19px] text-[#333]">
          <Ic s={16}>
            {l("M4 2h8l3.500 6-3.500 6H4L.500 8z")}
            <circle cx="8" cy="8" r="1.800" />
          </Ic>
          <CircleHelp size={17} strokeWidth={1.200} />
          <X size={14} strokeWidth={1.300} className="ml-[2px]" />
        </div>
      </div>
      <div className="ml-[5px] w-[259px] border-t border-r border-[#e5e5e5] grid grid-cols-[130px_1fr]">
        <div className="h-[132px] border-r border-b border-[#e5e5e5]">
          <Section title="对齐" icons={alignIcons} />
        </div>
        <div className="h-[132px] border-b border-[#e5e5e5]">
          <Section title="大小" icons={sizeIcons} />
        </div>
        <div className="h-[133px] border-r border-b border-[#e5e5e5]">
          <Section title="参考线布局" icons={guideIcons} pt={18} />
        </div>
        <div className="h-[133px] border-b border-[#e5e5e5]">
          <Section title="选择" icons={selectIcons} pt={18} />
        </div>
        <div className="h-[131px] border-r border-b border-[#f3f3f3]">
          <Section title="矢量" icons={vectorIcons} pt={17} />
        </div>
        <div className="h-[131px] border-b border-[#f3f3f3]">
          <Section title="剪贴板" icons={clipIcons} pt={17} />
        </div>
        <div className="h-[103px] border-r border-b border-[#f3f3f3]">
          <Section title="吸附" icons={snapIcons} pt={18} two />
        </div>
        <div className="h-[103px] border-b border-[#f3f3f3]">
          <Section title="旋转" icons={rotateIcons} pt={18} two />
        </div>
        <div className="col-span-2 h-[96px] border-b border-[#e5e5e5] pl-[16px] pt-[18px]">
          <div className="h-[16px] leading-[16px] text-[12px] text-[#666]">文本框</div>
          <div className="mt-[3px] grid grid-cols-[118px_1fr] auto-rows-[25px] text-[11px] text-[#222]">
            <div className="flex items-center gap-[5px]">
              <div className="w-[16px] h-[16px] rounded-full bg-[#fa4b3c] flex items-center justify-center">
                <div className="w-[7px] h-[7px] rounded-full bg-white" />
              </div>
              自由调整
            </div>
            <div className="flex items-center gap-[4px]">
              <div className="w-[16px] h-[16px] rounded-full border border-[#e2e2e2]" />
              根据文字
            </div>
            <div className="flex items-center gap-[5px]">
              <div className="w-[16px] h-[16px] rounded-full border border-[#e2e2e2]" />
              溢出缩排
            </div>
            <div className="flex items-center gap-[4px]">
              <div className="w-[16px] h-[16px] rounded-[2px] bg-[#f8453c] flex items-center justify-center">
                <svg width="10" height="8" viewBox="0 0 10 8" fill="none" stroke="#fff" strokeWidth="1.200"><path d="M1 4l3 3 5-6" /></svg>
              </div>
              自动换行
            </div>
          </div>
        </div>
        <div className="col-span-2 h-[132px] border-b border-[#e5e5e5] pt-[20px] pl-[16px]">
          <div className="flex items-center h-[16px]">
            <span className="text-[12px] text-[#666]">文本框边距</span>
            <Trash2 size={17} strokeWidth={1.100} className="ml-[121px] text-[#f85a5a]" />
            <RotateCw size={14} strokeWidth={1.200} className="ml-[14px] text-[#f85a5a]" />
          </div>
          <div className="mt-[10px] grid grid-cols-[20px_90px_28px_90px] auto-rows-[26px] gap-y-[8px] items-center">
            <Ic c={pink}>{l("M1.500 1v14M13 8H4M6.500 5.500L4 8l2.500 2.500")}</Ic>
            <MarginInput v="0.25cm" />
            <Ic c={`ml-[5px] ${red}`}>{l("M14.500 1v14M2 8h10M9.500 5.500L12 8l-2.500 2.500")}</Ic>
            <MarginInput v="0.25cm" />
            <Ic c={pink}>{l("M1 1.500h14M8 13V4M5.500 6.500L8 4l2.500 2.500")}</Ic>
            <MarginInput v="0.13cm" />
            <Ic c={`ml-[5px] ${pink}`}>{l("M1 14.500h14M8 3v9M5.500 9.500L8 12l2.500-2.500")}</Ic>
            <MarginInput v="0.13cm" />
          </div>
        </div>
      </div>
      <div className="absolute left-[262px] top-[718px] w-[7px] h-[50px] rounded-[4px] border border-[#888] bg-white flex flex-col justify-end pb-[4px] items-center">
        <div className="w-[3px] h-[24px] bg-[#ed7d31]" />
      </div>
    </div>
  );
}

function StatusBar() {
  return (
    <div className="h-[23px] shrink-0 bg-[#f3f3f3] border-t border-[#c6c6c6] border-b-2 border-b-[#e6eff6] flex items-stretch text-[12px] text-[#444]">
      <div className="pl-[7px] flex items-center whitespace-pre [word-spacing:1.500px]">幻灯片 第 1 张，共 1 张</div>
      <div className="ml-[19px] flex items-center">
        <Ic c="text-[#666]" s={14}>
          {l("M1.500 2.500h5v11h-5zM6.500 2.500l2 1v10M8.500 13.500h5.500V9M9.500 6l2 2 2.500-4")}
        </Ic>
      </div>
      <div className="ml-[18px] flex items-center">中文(中国)</div>
      <div className="ml-[17px] flex items-center">
        <Ic c="text-[#444]" s={15}>
          {l("M9 2A6 6 0 102 9")}
          {l("M8 8l6 6M14 8l-6 6")}
          {b(6, 0, 2, 3)}
        </Ic>
        <span className="ml-[3px]">辅助功能: 调查</span>
      </div>
      <div className="ml-auto flex items-stretch">
        <div className="flex items-center">
          <Ic c="text-[#555]" s={13}>
            {l("M1 7.500h11M1 10h11M3 12.500h7M4 4l2.500-2.500L9 4")}
          </Ic>
          <span className="ml-[3px]">备注</span>
        </div>
        <div className="ml-[19px] flex items-center">
          <svg width="15" height="15" viewBox="0 0 15 15" fill="#555">
            <path d="M1 1h13v9H7l-3 4v-4H1z" />
          </svg>
          <span className="ml-[2px]">批注</span>
        </div>
        <div className="ml-[19px] w-[40px] bg-[#c6c6c6] flex items-center justify-center text-[#666]">
          <Ic s={15}>
            {o(.500, .500, 14, 14)}
            {l("M4 .500v14M6.500 3.500h5.500v5H6.500zM6.500 11h6")}
          </Ic>
        </div>
        <div className="w-[40px] flex items-center justify-center text-[#666]">
          <Ic s={15}>
            {o(.500, 1.500, 6, 5)}{o(8.500, 1.500, 6, 5)}{o(.500, 9.500, 6, 5)}{o(8.500, 9.500, 6, 5)}
          </Ic>
        </div>
        <div className="w-[40px] flex items-center justify-center text-[#666]">
          <Ic s={15}>
            {o(1.500, .500, 12, 14)}
            {l("M7.500 .500v14M3 3.500h3M3 6h3M3 8.500h3M3 11h3M9 3.500h3M9 6h3M9 8.500h3M9 11h3")}
          </Ic>
        </div>
        <div className="w-[40px] flex items-center justify-center text-[#666]">
          <Ic s={15}>
            {l("M.500 1.500h14M2.500 1.500v7h10v-7M7.500 8.500v5M4.500 13.500h6")}
          </Ic>
        </div>
        <div className="ml-[5px] flex items-center">
          <div className="w-[8px] h-px bg-[#444]" />
          <div className="relative ml-[6px] w-[100px] h-px bg-[#444]">
            <div className="absolute left-[47px] top-[-5px] w-[5px] h-[11px] bg-[#666]" />
          </div>
          <svg width="9" height="9" viewBox="0 0 9 9" stroke="#444" className="ml-[5px]"><path d="M0 4.500h9M4.500 0v9" /></svg>
          <span className="ml-[13px] w-[31px] text-[#555]">104%</span>
          <Ic c="ml-[12px] mr-[6px] text-[#666]" s={14}>
            {o(.500, .500, 13, 13)}
            {l("M3 5V3h2M9 3h2v2M11 9v2H9M5 11H3V9")}
          </Ic>
        </div>
      </div>
    </div>
  );
}

function Watermark() {
  const ink = "text-white/70 [-webkit-text-stroke:1.200px_#d4d4d4] [font-family:'Liberation_Sans',sans-serif] font-bold";
  return (
    <div className="absolute inset-0 pointer-events-none overflow-hidden">
      <span className={`absolute left-[1473px] top-[860px] text-[80px] leading-[92px] ${ink}`}>Bai</span>
      <svg className="absolute left-[1590px] top-[826px]" width="90" height="115" viewBox="0 0 90 115" fill="rgba(255,255,255,.65)" stroke="#d6d6d6" strokeWidth="1.500">
        <ellipse cx="30" cy="20" rx="12" ry="17" />
        <ellipse cx="58" cy="22" rx="12" ry="17" />
        <ellipse cx="12" cy="45" rx="11" ry="17" />
        <path d="M38 50C25 50 20 75 10 85 0 100 10 112 25 112c10 0 20-4 30-2 15 3 28-2 28-18 0-14-14-20-20-28-6-8-12-14-25-14z" />
      </svg>
      <span className={`absolute left-[1610px] top-[880px] text-[44px] leading-[52px] ${ink}`}>du</span>
      <span className="absolute left-[1694px] top-[870px] text-[58px] leading-[74px] text-white/70 [-webkit-text-stroke:1.200px_#d4d4d4] [font-family:'Noto_Sans_CJK_SC',sans-serif] font-bold">经验</span>
      <span className="absolute left-[1475px] top-[942px] text-[42.500px] leading-[52px] text-white/70 [-webkit-text-stroke:1.200px_#d4d4d4] [font-family:'Liberation_Sans',sans-serif]">jingyan.baidu.com</span>
    </div>
  );
}

export default function App() {
  return (
    <div className="relative w-screen h-screen overflow-hidden flex flex-col bg-[#e6e6e6] [font-family:'Noto_Sans','Noto_Sans_CJK_SC',sans-serif]">
      <div className="relative h-[64px] shrink-0 bg-[#b7472a]">
        <HeaderArt />
        <TitleBar />
        <TabRow />
      </div>
      <Ribbon />
      <div className="flex-1 flex min-h-0">
        <ThumbPane />
        <Canvas />
        <div className="pt-[1px]">
          <DesignPanel />
        </div>
      </div>
      <StatusBar />
      <FillMenu />
      <Watermark />
    </div>
  );
}
